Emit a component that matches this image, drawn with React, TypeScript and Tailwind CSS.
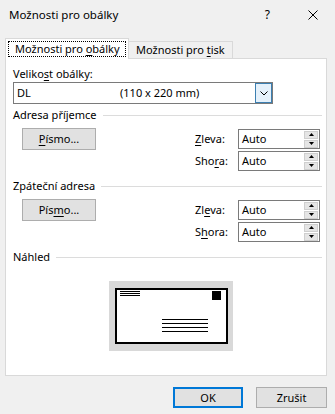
import React from "react";

const font = { fontFamily: '"Noto Sans", "Open Sans", sans-serif' };

function U({ children }: { children: React.ReactNode }) {
  return <span className="underline underline-offset-2 decoration-1">{children}</span>;
}

function SectionTitle({ children }: { children: React.ReactNode }) {
  return (
    <div className="flex items-center h-4 gap-[6px]">
      <span className="whitespace-nowrap">{children}</span>
      <div className="flex-1 h-px bg-[#dcdcdc]" />
    </div>
  );
}

function SpinBox() {
  return (
    <div className="flex items-center w-[82px] h-5 border border-[#7a7a7a] bg-white pl-[3px]">
      <span className="flex-1">Auto</span>
      <div className="flex flex-col gap-px mr-px">
        <div className="w-[14px] h-2 bg-[#e5e5e5] border border-[#cfcfcf] flex items-center justify-center">
          <svg width="5" height="3" viewBox="0 0 5 3"><path d="M0 3 L2.5 0 L5 3 Z" fill="#000" /></svg>
        </div>
        <div className="w-[14px] h-2 bg-[#e5e5e5] border border-[#cfcfcf] flex items-center justify-center">
          <svg width="5" height="3" viewBox="0 0 5 3"><path d="M0 0 L2.5 3 L5 0 Z" fill="#000" /></svg>
        </div>
      </div>
    </div>
  );
}

function AddressRow({
  font: fontLabel,
  left,
  top,
}: {
  font: React.ReactNode;
  left: React.ReactNode;
  top: React.ReactNode;
}) {
  return (
    <div className="flex">
      <button className="ml-[9px] w-[74px] h-[22px] bg-[#e1e1e1] border border-[#adadad] text-black">
        {fontLabel}
      </button>
      <div className="ml-auto mr-[2px] pt-px flex flex-col gap-[2px]">
        <div className="flex items-center">
          <span className="w-[43px] whitespace-nowrap">{left}</span>
          <SpinBox />
        </div>
        <div className="flex items-center">
          <span className="w-[43px] whitespace-nowrap">{top}</span>
          <SpinBox />
        </div>
      </div>
    </div>
  );
}

function EnvelopePreview() {
  return (
    <svg width="124" height="70" viewBox="0 0 124 70" shapeRendering="crispEdges">
      <rect x="0" y="0" width="124" height="70" fill="#d9d9d9" />
      <rect x="6" y="7" width="113" height="56" fill="#000" />
      <rect x="8" y="9" width="109" height="52" fill="#fff" />
      <rect x="11" y="10" width="20" height="1" fill="#000" />
      <rect x="11" y="12" width="20" height="1" fill="#000" />
      <rect x="11" y="14" width="20" height="1" fill="#000" />
      <rect x="103" y="10" width="9" height="9" fill="#000" />
      <rect x="53" y="38" width="46" height="1" fill="#000" />
      <rect x="53" y="42" width="46" height="1" fill="#000" />
      <rect x="53" y="46" width="46" height="1" fill="#000" />
      <rect x="53" y="50" width="46" height="1" fill="#000" />
    </svg>
  );
}

export default function App() {
  return (
    <div className="w-[335px] h-[414px] bg-[#f0f0f0] text-[11px] leading-4 text-black overflow-hidden" style={font}>
      {/* Title bar */}
      <div className="h-[38px] flex items-start pt-[7px] pl-[9px] pr-[17px]">
        <span className="text-[11.5px]">Možnosti pro obálky</span>
        <span className="ml-auto mr-[38px] text-[12px]">?</span>
        <svg width="10" height="10" viewBox="0 0 10 10" className="mt-[3px]">
          <path d="M0.5 0.5 L9.5 9.5 M9.5 0.5 L0.5 9.5" stroke="#000" strokeWidth="1" />
        </svg>
      </div>

      {/* Tabs */}
      <div className="flex items-end pl-[5px] h-[20px] whitespace-nowrap">
        <div className="relative z-10 -mb-px w-[124px] h-[21px] bg-white border-t border-l border-r border-[#d9d9d9] px-[2px] pt-[2px]">
          <div className="h-[16px] border border-dotted border-black pl-[6px] leading-[14px]">
            Možnosti pro <U>o</U>bálky
          </div>
        </div>
        <div className="w-[104px] h-[17px] border-t border-r border-[#d9d9d9] pl-[7px] leading-[16px]">
          Možnosti pro <U>t</U>isk
        </div>
      </div>

      {/* Panel */}
      <div className="ml-[5px] w-[322px] h-[318px] bg-white border border-[#d9d9d9] pl-[7px] pr-[4px]">
        <div className="pt-[7px]">
          Veliko<U>s</U>t obálky:
        </div>
        <div className="w-[260px] h-[22px] border border-[#7a7a7a] flex items-center">
          <span className="pl-[3px] w-[106px]">DL</span>
          <span className="flex-1">(110 x 220 mm)</span>
          <div className="w-[17px] h-[20px] bg-[#e5f1fb] border border-[#3c7fb1] flex items-center justify-center">
            <svg width="8" height="5" viewBox="0 0 8 5">
              <path d="M0.5 0.5 L4 4 L7.5 0.5" stroke="#000" strokeWidth="1" fill="none" />
            </svg>
          </div>
        </div>

        <div className="mt-[3px]">
          <SectionTitle>Adresa příjemce</SectionTitle>
        </div>
        <div className="mt-[5px]">
          <AddressRow
            font={<><U>P</U>ísmo...</>}
            left={<><U>Z</U>leva:</>}
            top={<>Sho<U>r</U>a:</>}
          />
        </div>

        <div className="mt-[7px]">
          <SectionTitle>Zpáteční adresa</SectionTitle>
        </div>
        <div className="mt-[5px]">
          <AddressRow
            font={<>Pís<U>m</U>o...</>}
            left={<>Zl<U>e</U>va:</>}
            top={<>S<U>h</U>ora:</>}
          />
        </div>

        <div className="mt-[7px]">
          <SectionTitle>Náhled</SectionTitle>
        </div>
        <div className="mt-[16px] ml-[96px]">
          <EnvelopePreview />
        </div>
      </div>

      {/* Buttons */}
      <div className="flex justify-end gap-[13px] pr-[8px] pt-[11px]">
        <button className="w-[70px] h-[21px] bg-[#e1e1e1] border-2 border-[#0078d7]">OK</button>
        <button className="w-[71px] h-[21px] bg-[#e1e1e1] border border-[#adadad]">Zrušit</button>
      </div>
    </div>
  );
}
